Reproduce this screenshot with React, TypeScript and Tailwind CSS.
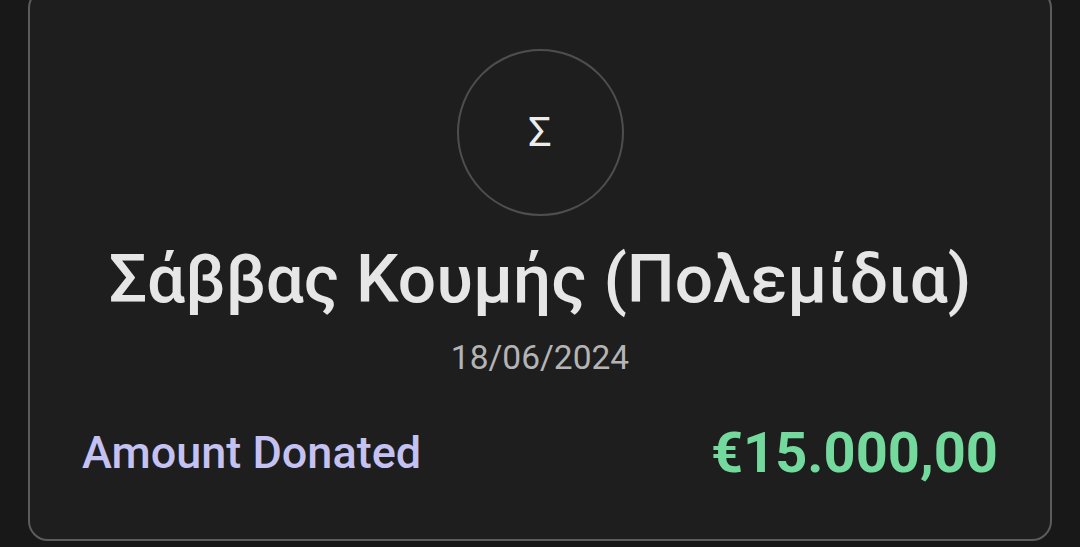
export default function App() {
    return (
        <div className="w-[1080px] h-[547px] overflow-hidden bg-[#181818] px-[28px]" style={{ fontFamily: 'Roboto, "Noto Sans", sans-serif' }}>
            <div className="-mt-[12px] h-[553px] rounded-[20px] border-2 border-[#5c5c5c] bg-[#1e1e1e] flex flex-col items-center pt-[59px]">
                {/* avatar */}
                <div className="w-[167px] h-[167px] rounded-full border-2 border-[#4e4e4e] flex items-center justify-center">
                    <span className="text-[41px] leading-none text-[#ececec]">Σ</span>
                </div>

                <h2 className="mt-[23px] text-[67.5px] leading-[80px] font-medium text-[#e6e6e6]">
                    Σάββας Κουμής (Πολεμίδια)
                </h2>
                <p className="mt-[19px] text-[33.5px] leading-[40px] text-[#b4b4b4]">18/06/2024</p>

                <div className="w-full flex items-center justify-between pl-[52px] pr-[52px] mt-[45px]">
                    <span className="text-[45px] leading-[60px] font-medium text-[#c4c2f2]">Amount Donated</span>
                    <span className="text-[56px] leading-[60px] font-bold text-[#74d99c]">€15.000,00</span>
                </div>
            </div>
        </div>
    );
}
